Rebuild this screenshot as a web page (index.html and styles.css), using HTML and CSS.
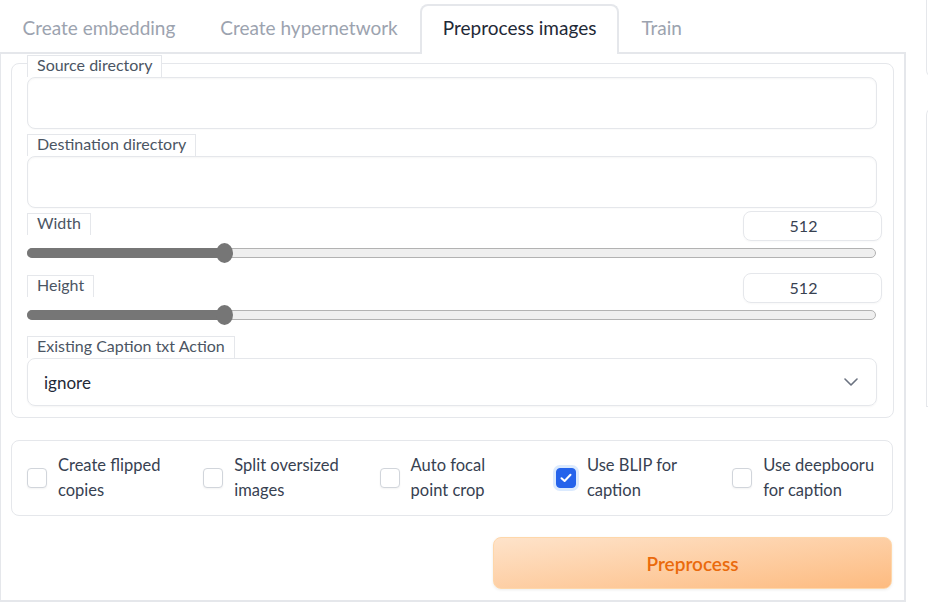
FILE: index.html
```html
<!DOCTYPE html>
<html>
<head>
<meta charset="utf-8">
<link rel="stylesheet" href="styles.css">
</head>
<body>
<div class="page">
  <div class="main">
    <div class="tabs">
      <button class="tab">Create embedding</button>
      <button class="tab">Create hypernetwork</button>
      <button class="tab active">Preprocess images</button>
      <button class="tab">Train</button>
    </div>
    <div class="panel">
      <div class="group">
        <div class="field first">
          <span class="label">Source directory</span>
          <div class="textbox"></div>
        </div>
        <div class="field">
          <span class="label">Destination directory</span>
          <div class="textbox"></div>
        </div>
        <div class="slider-field">
          <div class="slider-head">
            <span class="label">Width</span>
            <div class="number">512</div>
          </div>
          <div class="track"><div class="fill" style="width:23.4%"><span class="thumb"></span></div></div>
        </div>
        <div class="slider-field second">
          <div class="slider-head">
            <span class="label">Height</span>
            <div class="number">512</div>
          </div>
          <div class="track"><div class="fill" style="width:23.4%"><span class="thumb"></span></div></div>
        </div>
        <div class="field caption">
          <span class="label">Existing Caption txt Action</span>
          <div class="dropdown">
            <span>ignore</span>
            <svg class="chevron" width="14" height="8" viewBox="0 0 14 8"><path d="M1 1 L7 7 L13 1" fill="none" stroke="#6b7280" stroke-width="1.6" stroke-linecap="round" stroke-linejoin="round"/></svg>
          </div>
        </div>
      </div>

      <div class="checks">
        <label class="check"><span class="box"></span><span class="text">Create flipped<br>copies</span></label>
        <label class="check"><span class="box"></span><span class="text">Split oversized<br>images</span></label>
        <label class="check"><span class="box"></span><span class="text">Auto focal<br>point crop</span></label>
        <label class="check"><span class="box checked"><svg width="12" height="10" viewBox="0 0 12 10"><path d="M1.5 5.2 L4.6 8 L10.5 1.8" fill="none" stroke="#fff" stroke-width="2" stroke-linecap="round" stroke-linejoin="round"/></svg></span><span class="text">Use BLIP for<br>caption</span></label>
        <label class="check"><span class="box"></span><span class="text">Use deepbooru<br>for caption</span></label>
      </div>

      <div class="actions">
        <button class="primary">Preprocess</button>
      </div>
    </div>
  </div>
  <div class="side">
    <div class="side-box top"></div>
    <div class="side-box next"></div>
  </div>
</div>
</body>
</html>
```

FILE: styles.css
```css
* { box-sizing: border-box; }
html, body { margin: 0; padding: 0; background: #fff; }
body {
  font-family: "Source Sans Pro", Lato, "Noto Sans", sans-serif;
  color: #374151;
  overflow: hidden;
}
.page { display: flex; align-items: flex-start; }
.main { width: 906px; flex: none; }

.tabs {
  display: flex;
  height: 52px;
  padding-top: 4px;
  position: relative;
  z-index: 1;
}
.tab {
  height: 48px;
  padding: 0 20.5px 3px;
  border: 2px solid transparent;
  border-bottom: none;
  border-radius: 8px 8px 0 0;
  background: transparent;
  font-family: inherit;
  font-size: 19px;
  color: #9ca3af;
  display: flex;
  align-items: center;
  cursor: pointer;
}
.tab.active {
  height: 50px;
  margin-bottom: -2px;
  border-color: #e5e7eb;
  background: #fff;
  color: #1f2937;
  padding-bottom: 5px;
}

.panel {
  border: 2px solid #e5e7eb;
  border-left-width: 1px;
  padding: 0 0 11px;
  background: #fff;
}

.group {
  margin: 9px 10px 0;
  border: 1px solid #e5e7eb;
  border-radius: 8px;
  padding: 0 16px 11px 15px;
}
.label {
  display: inline-block;
  height: 22px;
  line-height: 18px;
  padding: 0 9px;
  border: 1px solid #e5e7eb;
  border-bottom: none;
  background: #fff;
  font-size: 16px;
  color: #4b5563;
  vertical-align: top;
}
.field { margin-top: 5px; }
.field.first { margin-top: -9px; }
.field .label { display: block; width: max-content; }
.textbox {
  height: 52px;
  border: 1px solid #e5e7eb;
  border-radius: 8px;
  box-shadow: inset 0 1px 2px rgba(0,0,0,0.04), 0 1px 1px rgba(0,0,0,0.02);
  background: #fff;
}

.slider-field { margin-top: 3px; }
.slider-field.second { margin-top: 15px; }
.slider-head {
  display: flex;
  justify-content: space-between;
  align-items: flex-start;
}
.slider-head .label { margin-top: 2px; }
.number {
  width: 139px;
  height: 30px;
  margin-right: -5px;
  padding-right: 18px;
  border: 1px solid #e5e7eb;
  border-radius: 8px;
  text-align: center;
  line-height: 28px;
  font-size: 16px;
  color: #374151;
  box-shadow: 0 1px 2px rgba(0,0,0,0.03);
}
.track {
  margin-top: 7px;
  height: 10px;
  border: 1px solid #b2b2b2;
  border-radius: 5px;
  background: #efefef;
  margin-right: 1px;
}
.fill {
  height: 10px;
  margin: -1px 0 0 -1px;
  background: #767676;
  border-radius: 5px 0 0 5px;
  position: relative;
}
.thumb {
  position: absolute;
  right: -8px;
  top: -5px;
  width: 17px;
  height: 20px;
  border-radius: 50%;
  background: #767676;
}

.field.caption { margin-top: 16px; }
.dropdown {
  height: 48px;
  border: 1px solid #e5e7eb;
  border-radius: 8px;
  box-shadow: 0 1px 2px rgba(0,0,0,0.04);
  display: flex;
  align-items: center;
  justify-content: space-between;
  padding: 0 18px 0 16px;
  font-size: 17px;
  color: #1f2937;
}

.checks {
  margin: 22px 11px 0 10px;
  height: 76px;
  border: 1px solid #e5e7eb;
  border-radius: 8px;
  padding: 0 16px 0 15px;
  display: grid;
  grid-template-columns: repeat(5, 1fr);
  column-gap: 32.5px;
  align-items: center;
}
.check {
  display: flex;
  align-items: center;
  gap: 11px;
  font-size: 16.5px;
  line-height: 25px;
  color: #374151;
  white-space: nowrap;
}
.check .text { margin-top: -1px; }
.box {
  width: 20px;
  height: 20px;
  flex: none;
  border: 1px solid #d1d5db;
  border-radius: 4px;
  background: #fff;
  box-shadow: 0 1px 2px rgba(0,0,0,0.05);
  display: flex;
  align-items: center;
  justify-content: center;
}
.box.checked {
  background: #2563eb;
  border-color: #2563eb;
  box-shadow: 0 0 0 3px #dbeafe;
}

.actions {
  display: flex;
  justify-content: flex-end;
  margin: 21px 12px 0 0;
}
.primary {
  width: 399px;
  height: 52px;
  border: 1px solid #fed7aa;
  border-radius: 8px;
  background: linear-gradient(to bottom right, #fee3ca, #fdbb80);
  box-shadow: 0 1px 3px rgba(0,0,0,0.08);
  font-family: inherit;
  font-size: 19px;
  font-weight: 600;
  color: #ea6a0c;
  cursor: pointer;
}

.side { margin-left: 20px; flex: none; width: 40px; }
.side-box {
  border: 1px solid #e5e7eb;
  border-right: none;
  background: #fff;
}
.side-box.top { height: 78px; border-top: none; border-radius: 0 0 0 8px; }
.side-box.next { height: 300px; margin-top: 29px; border-radius: 8px 0 0 0; }
```
